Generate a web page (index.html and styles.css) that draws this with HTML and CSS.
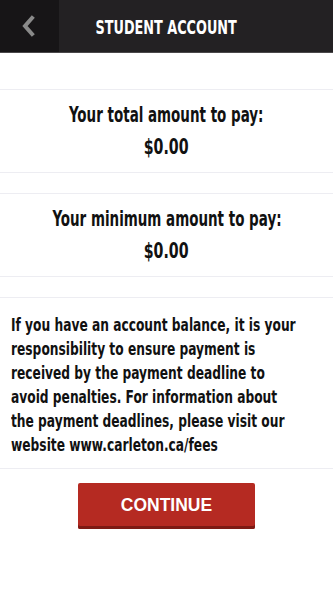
FILE: index.html
```html
<!DOCTYPE html>
<html>
<head>
<meta charset="utf-8">
<link rel="stylesheet" href="styles.css">
</head>
<body>
<header class="topbar">
  <div class="back">
    <svg width="16" height="22" viewBox="0 0 16 22"><path d="M12 3 L5 11 L12 19" fill="none" stroke="#8a8a8a" stroke-width="4" stroke-linecap="square"/></svg>
  </div>
  <div class="title"><span class="narrow">STUDENT ACCOUNT</span></div>
  <div class="side"></div>
</header>
<main>
  <section class="card amount">
    <div class="label narrow">Your total amount to pay:</div>
    <div class="value narrow">$0.00</div>
  </section>
  <section class="card amount">
    <div class="label narrow">Your minimum amount to pay:</div>
    <div class="value narrow">$0.00</div>
  </section>
  <section class="card info">
    <p><span class="ln">If you have an account balance, it is your</span> <span class="ln">responsibility to ensure payment is</span> <span class="ln">received by the payment deadline to</span> <span class="ln">avoid penalties. For information about</span> <span class="ln">the payment deadlines, please visit our</span> <span class="ln">website www.carleton.ca/fees</span></p>
  </section>
  <div class="actions">
    <button class="continue">CONTINUE</button>
  </div>
</main>
</body>
</html>
```
FILE: styles.css
```css
* { box-sizing: border-box; }
html, body { margin: 0; padding: 0; background: #fff; }
body { width: 333px; height: 592px; overflow: hidden; font-family: "DejaVu Sans", sans-serif; font-stretch: condensed; color: #111; }
.narrow { display: inline-block; white-space: nowrap; transform-origin: center; }
.topbar { height: 53px; display: grid; grid-template-columns: 59px 1fr 59px; background: #232123; border-bottom: 1px solid #4a484a; }
.back { background: #171517; display: flex; align-items: center; justify-content: center; padding-right: 4px; }
.title { display: flex; align-items: center; justify-content: center; color: #fff; font-weight: bold; font-size: 19px; padding-top: 1px; }
.title .narrow { transform: scaleX(0.75); }
main { padding-top: 36px; }
.card { border-top: 1px solid #ededf2; border-bottom: 1px solid #ededf2; background: #fff; }
.amount { height: 84px; display: flex; flex-direction: column; align-items: center; justify-content: center; gap: 6px; font-weight: bold; font-size: 20.5px; margin-bottom: 20px; }
.amount .label, .amount .value { line-height: 26px; }
.amount .label { transform: scaleX(0.73); }
.amount .value { transform: scaleX(0.77); }
.info { padding: 15px 11px 11px 11px; }
.info p { margin: 0; font-weight: bold; font-size: 17.5px; line-height: 24px; }
.info .ln { display: block; white-space: nowrap; transform: scaleX(0.777); transform-origin: left center; }
.actions { display: flex; justify-content: center; padding-top: 14px; }
.continue { width: 177px; height: 46px; border: none; border-radius: 2px; background: #b52a22; box-shadow: inset 0 -3px 0 #7e1a14; color: #fff; font-family: "Liberation Sans", Arial, sans-serif; font-weight: bold; font-size: 17.5px; padding: 0 0 2px; }
```
